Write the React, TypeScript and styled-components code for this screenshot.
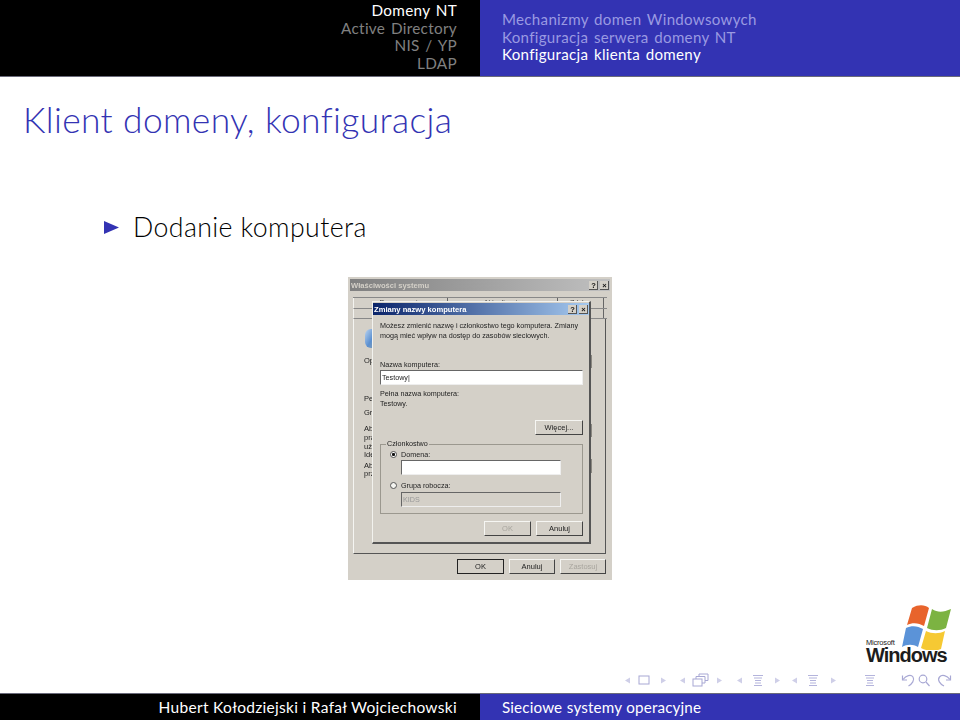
import React from "react";
import styled, { createGlobalStyle } from "styled-components";

const Global = createGlobalStyle`
  html, body { margin: 0; padding: 0; background: #fff; }
  body { font-family: Lato, "Liberation Sans", sans-serif; }
`;

const Slide = styled.div`
  position: relative;
  width: 960px;
  height: 720px;
  overflow: hidden;
  background: #fff;
  display: flex;
  flex-direction: column;
`;

const Band = styled.div<{ $h: number }>`
  display: grid;
  grid-template-columns: 480px 480px;
  height: ${(p) => p.$h}px;
  flex: none;
`;

const BlackCell = styled.div`
  background: #000;
  color: #808080;
  text-align: right;
  padding-right: 23px;
`;

const BlueCell = styled.div`
  background: #3333b3;
  color: #a0a0e6;
  padding-left: 22px;
`;

const HeadLeftLine = styled.div<{ $on?: boolean }>`
  font-size: 15.3px;
  line-height: 17.7px;
  letter-spacing: 0.3px;
  word-spacing: 1.5px;
  font-weight: 400;
  color: ${(p) => (p.$on ? "#fff" : "#808080")};
`;

const HeadRightLine = styled.div<{ $on?: boolean }>`
  font-size: 15.1px;
  line-height: 17.5px;
  letter-spacing: 0.3px;
  word-spacing: 1.5px;
  font-weight: 400;
  color: ${(p) => (p.$on ? "#fff" : "#9a9ae2")};
`;

const HeadLeft = styled(BlackCell)`
  padding-top: 2px;
`;
const HeadRight = styled(BlueCell)`
  padding-top: 11px;
`;

const Rule = styled.div`
  height: 1px;
  flex: none;
  background: #6a6a7a;
`;

const Main = styled.main`
  flex: 1;
  min-height: 0;
  display: flex;
  flex-direction: column;
`;

const Title = styled.h1`
  margin: 19px 0 0 23px;
  font-size: 35.4px;
  line-height: 47px;
  font-weight: 300;
  color: #3333b3;
  letter-spacing: 0.35px;
`;

const Bullet = styled.div`
  margin: 67px 0 0 104px;
  display: flex;
  align-items: center;
  gap: 14px;
  font-size: 26.7px;
  line-height: 34px;
  font-weight: 300;
  color: #000;
  letter-spacing: 0.4px;
`;

const Arrow = styled.svg`
  width: 15px;
  height: 13px;
  flex: none;
`;

const Shot = styled.figure`
  position: relative;
  margin: 33px 0 0 348px;
  width: 264px;
  height: 303px;
  box-sizing: border-box;
  background: #d4d0c8;
  font-family: "Liberation Sans", sans-serif;
  font-size: 7px;
  color: #222;
  filter: blur(0.45px);
  display: flex;
  flex-direction: column;
  padding: 2px 2px 0;
`;

const TitleBar = styled.div<{ $active?: boolean }>`
  height: 12px;
  flex: none;
  display: flex;
  align-items: center;
  justify-content: space-between;
  padding: 0 1px;
  font-size: 7.6px;
  font-weight: 700;
  color: ${(p) => (p.$active ? "#fff" : "#d4d0c8")};
  background: ${(p) =>
    p.$active
      ? "linear-gradient(90deg, #0a246a, #a6caf0)"
      : "linear-gradient(90deg, #808080, #c0c0c0)"};
`;

const WinBtns = styled.div`
  display: flex;
  gap: 2px;
`;

const WinBtn = styled.span`
  width: 9px;
  height: 9px;
  background: #d4d0c8;
  color: #111;
  font-size: 7.5px;
  line-height: 9px;
  text-align: center;
  font-weight: 700;
  box-shadow: inset -1px -1px 0 #555;
`;

const Tabs = styled.div`
  flex: none;
  height: 22px;
  margin: 6px 3px 0 3px;
  border-top: 1px solid #888;
  display: flex;
  flex-direction: column;
  box-sizing: border-box;
`;

const TabRow = styled.div`
  display: grid;
  grid-template-columns: 94px 110px 46px;
  height: 11px;
  overflow: hidden;
  border-left: 1px solid #f4f4f0;
  border-bottom: 1px solid #888;
`;

const Tab = styled.div`
  border-right: 1px solid #666;
  line-height: 10px;
  text-align: center;
  color: #444;
`;

const Panel = styled.div`
  flex: none;
  height: 235px;
  margin: 0 4px 0 3px;
  border-right: 1px solid #555;
  border-bottom: 1px solid #555;
  border-left: 1px solid #f5f5f2;
  box-sizing: border-box;
  position: relative;
  padding: 10px 0 0 10px;
`;

const Globe = styled.div`
  width: 10px;
  height: 19px;
  margin-left: 1px;
  background: linear-gradient(120deg, #bcd4f0, #5a8fd0 60%, #8aa0b0);
  border-radius: 6px 0 0 6px;
`;

const CutLabel = styled.div<{ $t: number }>`
  margin-top: ${(p) => p.$t}px;
  line-height: 8px;
  font-size: 7.5px;
  white-space: nowrap;
`;

const Stub = styled.div<{ $t: number; $h: number }>`
  position: absolute;
  top: ${(p) => p.$t}px;
  right: 13px;
  width: 2px;
  height: ${(p) => p.$h}px;
  background: #8a8780;
`;

const Footer = styled.div`
  flex: none;
  display: flex;
  justify-content: flex-end;
  gap: 5px;
  padding: 5px 4px 0 0;
`;

const Btn = styled.div<{ $w: number; $def?: boolean; $dis?: boolean }>`
  width: ${(p) => p.$w}px;
  height: 15px;
  box-sizing: border-box;
  display: flex;
  align-items: center;
  justify-content: center;
  font-size: 7.5px;
  color: ${(p) => (p.$dis ? "#a8a59e" : "#222")};
  border-top: 1px solid #f6f6f3;
  border-left: 1px solid #f6f6f3;
  border-right: 1px solid #444;
  border-bottom: 1px solid #444;
  ${(p) => p.$def && "outline: 1px solid #222; outline-offset: -1px;"}
`;

const Dialog = styled.div`
  position: absolute;
  left: 24px;
  top: 24px;
  width: 219px;
  height: 243px;
  box-sizing: border-box;
  background: #d4d0c8;
  border-right: 2px solid #555;
  border-bottom: 2px solid #555;
  border-top: 1px solid #f2f2ee;
  border-left: 1px solid #f2f2ee;
  padding: 1px 0 0 0;
  display: flex;
  flex-direction: column;
`;

const DialogBody = styled.div`
  padding: 6px 6px 0 7px;
  flex: 1;
  display: flex;
  flex-direction: column;
`;

const Para = styled.div`
  font-size: 7.2px;
  line-height: 9.5px;
  height: 39px;
`;

const Lbl = styled.div<{ $t?: number }>`
  font-size: 7.2px;
  line-height: 9px;
  margin-top: ${(p) => p.$t ?? 0}px;
`;

const Input = styled.div<{ $w?: number; $dis?: boolean; $t?: number }>`
  height: 15px;
  flex: none;
  box-sizing: border-box;
  margin-top: ${(p) => p.$t ?? 0}px;
  width: ${(p) => (p.$w ? `${p.$w}px` : "100%")};
  background: ${(p) => (p.$dis ? "#d4d0c8" : "#fff")};
  border-top: 1px solid #666;
  border-left: 1px solid #666;
  border-right: 1px solid #eee;
  border-bottom: 1px solid #eee;
  font-size: 7.2px;
  line-height: 13px;
  padding-left: 1px;
  color: ${(p) => (p.$dis ? "#999" : "#222")};
`;

const MoreRow = styled.div`
  display: flex;
  justify-content: flex-end;
  margin-top: 12px;
`;

const Group = styled.div`
  position: relative;
  margin: 9px 0 0;
  padding: 5px 0 0 20px;
  height: 70px;
  flex: none;
  box-sizing: border-box;
  border: 1px solid #9b988f;
`;

const Legend = styled.span`
  position: absolute;
  left: 5px;
  top: -5px;
  font-size: 7.2px;
  line-height: 8px;
  padding: 0 1px;
  background: #d4d0c8;
`;

const RadioRow = styled.div<{ $t?: number }>`
  position: relative;
  font-size: 7.2px;
  line-height: 9px;
  margin-top: ${(p) => p.$t ?? 0}px;
`;

const Radio = styled.span<{ $on?: boolean }>`
  position: absolute;
  left: -11px;
  top: 1px;
  width: 7px;
  height: 7px;
  box-sizing: border-box;
  border-radius: 50%;
  border: 1px solid #555;
  background: ${(p) =>
    p.$on ? "radial-gradient(circle, #111 1.3px, #fff 1.8px)" : "#f4f4f0"};
`;

const DialogFoot = styled.div`
  display: flex;
  justify-content: flex-end;
  gap: 5px;
  margin-top: 7px;
`;

const Logo = styled.div`
  position: absolute;
  left: 866px;
  top: 604px;
  width: 86px;
  height: 62px;
`;

const Flag = styled.svg`
  position: absolute;
  left: 36px;
  top: 0;
  width: 50px;
  height: 46px;
  filter: blur(0.4px);
`;

const Ms = styled.span`
  position: absolute;
  left: 0;
  top: 34px;
  font-family: "Liberation Sans", sans-serif;
  font-size: 7.5px;
  line-height: 9px;
  color: #222;
  letter-spacing: -0.2px;
`;

const WinWord = styled.span`
  position: absolute;
  left: 0;
  top: 39px;
  font-family: "Liberation Sans", sans-serif;
  font-size: 20px;
  line-height: 24px;
  font-weight: 700;
  color: #1c1c1c;
  letter-spacing: -1px;
`;

const Nav = styled.svg`
  position: absolute;
  left: 615px;
  top: 669px;
  width: 345px;
  height: 24px;
  filter: blur(0.3px);
`;

const FootLeft = styled(BlackCell)`
  color: #fff;
  font-size: 15.5px;
  line-height: 26px;
  font-weight: 400;
  letter-spacing: 0.3px;
`;

const FootRight = styled(BlueCell)`
  color: #fff;
  font-size: 15.2px;
  line-height: 26px;
  font-weight: 400;
  letter-spacing: 0.15px;
  word-spacing: 0.5px;
`;

const NavLines: React.FC<{ x: number }> = ({ x }) => (
  <g stroke="#b4b4dc" strokeWidth="1">
    <path d={`M${x} 6.500h10M${x + 1} 9h8M${x + 2} 11.500h6M${x + 2} 14h6M${x + 1} 16.500h8`} />
  </g>
);

const Tri: React.FC<{ x: number; dir: 1 | -1 }> = ({ x, dir }) => (
  <path d={`M${x} 8.500L${x + 5 * dir} 11.500L${x} 14.500Z`} fill="#cfcfe8" />
);

export default function App() {
  return (
    <Slide>
      <Global />
      <Band $h={76}>
        <HeadLeft>
          <HeadLeftLine $on>Domeny NT</HeadLeftLine>
          <HeadLeftLine>Active Directory</HeadLeftLine>
          <HeadLeftLine>NIS / YP</HeadLeftLine>
          <HeadLeftLine>LDAP</HeadLeftLine>
        </HeadLeft>
        <HeadRight>
          <HeadRightLine>Mechanizmy domen Windowsowych</HeadRightLine>
          <HeadRightLine>Konfiguracja serwera domeny NT</HeadRightLine>
          <HeadRightLine $on>Konfiguracja klienta domeny</HeadRightLine>
        </HeadRight>
      </Band>
      <Rule />
      <Main>
        <Title>Klient domeny, konfiguracja</Title>
        <Bullet>
          <Arrow viewBox="0 0 15 13">
            <path d="M0 0L15 6.500L0 13Z" fill="#3333b3" />
          </Arrow>
          Dodanie komputera
        </Bullet>
        <Shot>
          <TitleBar>
            <span>Właściwości systemu</span>
            <WinBtns>
              <WinBtn>?</WinBtn>
              <WinBtn>×</WinBtn>
            </WinBtns>
          </TitleBar>
          <Tabs>
            <TabRow>
              <Tab>Przywracanie</Tab>
              <Tab>Aktualizacje</Tab>
              <Tab>Zdalny</Tab>
            </TabRow>
            <TabRow>
              <Tab>Ogólne</Tab>
              <Tab>Nazwa komputera</Tab>
              <Tab>Sprzęt</Tab>
            </TabRow>
          </Tabs>
          <Panel>
            <Globe />
            <CutLabel $t={9}>Opis</CutLabel>
            <CutLabel $t={30}>Pełna</CutLabel>
            <CutLabel $t={6}>Grupa</CutLabel>
            <CutLabel $t={8}>Aby</CutLabel>
            <CutLabel $t={1}>pracy</CutLabel>
            <CutLabel $t={1}>użyj</CutLabel>
            <CutLabel $t={0}>Ident</CutLabel>
            <CutLabel $t={3}>Aby</CutLabel>
            <CutLabel $t={0}>przy</CutLabel>
            <Stub $t={36} $h={13} />
            <Stub $t={105} $h={13} />
            <Stub $t={140} $h={14} />
          </Panel>
          <Footer>
            <Btn $w={47} $def>OK</Btn>
            <Btn $w={46}>Anuluj</Btn>
            <Btn $w={46} $dis>Zastosuj</Btn>
          </Footer>
          <Dialog>
            <TitleBar $active>
              <span>Zmiany nazwy komputera</span>
              <WinBtns>
                <WinBtn>?</WinBtn>
                <WinBtn>×</WinBtn>
              </WinBtns>
            </TitleBar>
            <DialogBody>
              <Para>
                Możesz zmienić nazwę i członkostwo tego komputera. Zmiany
                <br />
                mogą mieć wpływ na dostęp do zasobów sieciowych.
              </Para>
              <Lbl>Nazwa komputera:</Lbl>
              <Input $t={1}>Testowy|</Input>
              <Lbl $t={4}>Pełna nazwa komputera:</Lbl>
              <Lbl $t={1}>Testowy.</Lbl>
              <MoreRow>
                <Btn $w={48}>Więcej...</Btn>
              </MoreRow>
              <Group>
                <Legend>Członkostwo</Legend>
                <RadioRow>
                  <Radio $on />
                  Domena:
                </RadioRow>
                <Input $w={160} $t={1}></Input>
                <RadioRow $t={6}>
                  <Radio />
                  Grupa robocza:
                </RadioRow>
                <Input $w={160} $t={2} $dis>KIDS</Input>
              </Group>
              <DialogFoot>
                <Btn $w={47} $dis>OK</Btn>
                <Btn $w={47}>Anuluj</Btn>
              </DialogFoot>
            </DialogBody>
          </Dialog>
        </Shot>
      </Main>
      <Logo>
        <Flag viewBox="0 0 50 46">
          <path d="M10 4C17 0 23 1 27 4L22 22C17 19 11 18 5 21Z" fill="#e8642c" />
          <path d="M30 5C36 9 42 8 49 5L44 24C38 27 31 27 25 24Z" fill="#7cb342" />
          <path d="M4 24C10 21 16 22 21 25L16 43C11 40 5 40 0 43Z" fill="#5b93d8" />
          <path d="M24 27C30 30 37 30 43 27L39 45C32 48 25 47 19 44Z" fill="#f6c933" />
        </Flag>
        <Ms>Microsoft</Ms>
        <WinWord>Windows</WinWord>
      </Logo>
      <Nav viewBox="0 0 345 24" fill="none">
        <Tri x={15} dir={-1} />
        <rect x="24" y="7" width="10" height="8" stroke="#a8a8d4" />
        <Tri x={46} dir={1} />
        <Tri x={70} dir={-1} />
        <g stroke="#a8a8d4">
          <rect x="78" y="10" width="9" height="7" fill="#fff" />
          <path d="M81 10V7.500h9V14h-3M84 7.500V5h9v6.500h-3" />
        </g>
        <Tri x={102} dir={1} />
        <Tri x={127} dir={-1} />
        <NavLines x={138} />
        <Tri x={160} dir={1} />
        <Tri x={182} dir={-1} />
        <NavLines x={193} />
        <Tri x={216} dir={1} />
        <NavLines x={250} />
        <g stroke="#a8a8d4" strokeWidth="1.200">
          <path d="M288 10.500c3-4 8-5.500 10-2.500s-1 7-4.500 9" />
          <path d="M287.500 6.500v4.500h4.500" />
          <circle cx="308" cy="10" r="3.800" />
          <path d="M311 13l3.500 4" />
          <path d="M335 10.500c-3-4-8-5.500-10.500-2.500s.5 7 4.500 9" />
          <path d="M335.500 6.500v4.500h-4.500" />
        </g>
      </Nav>
      <Rule />
      <Band $h={26}>
        <FootLeft>Hubert Kołodziejski i Rafał Wojciechowski</FootLeft>
        <FootRight>Sieciowe systemy operacyjne</FootRight>
      </Band>
    </Slide>
  );
}
